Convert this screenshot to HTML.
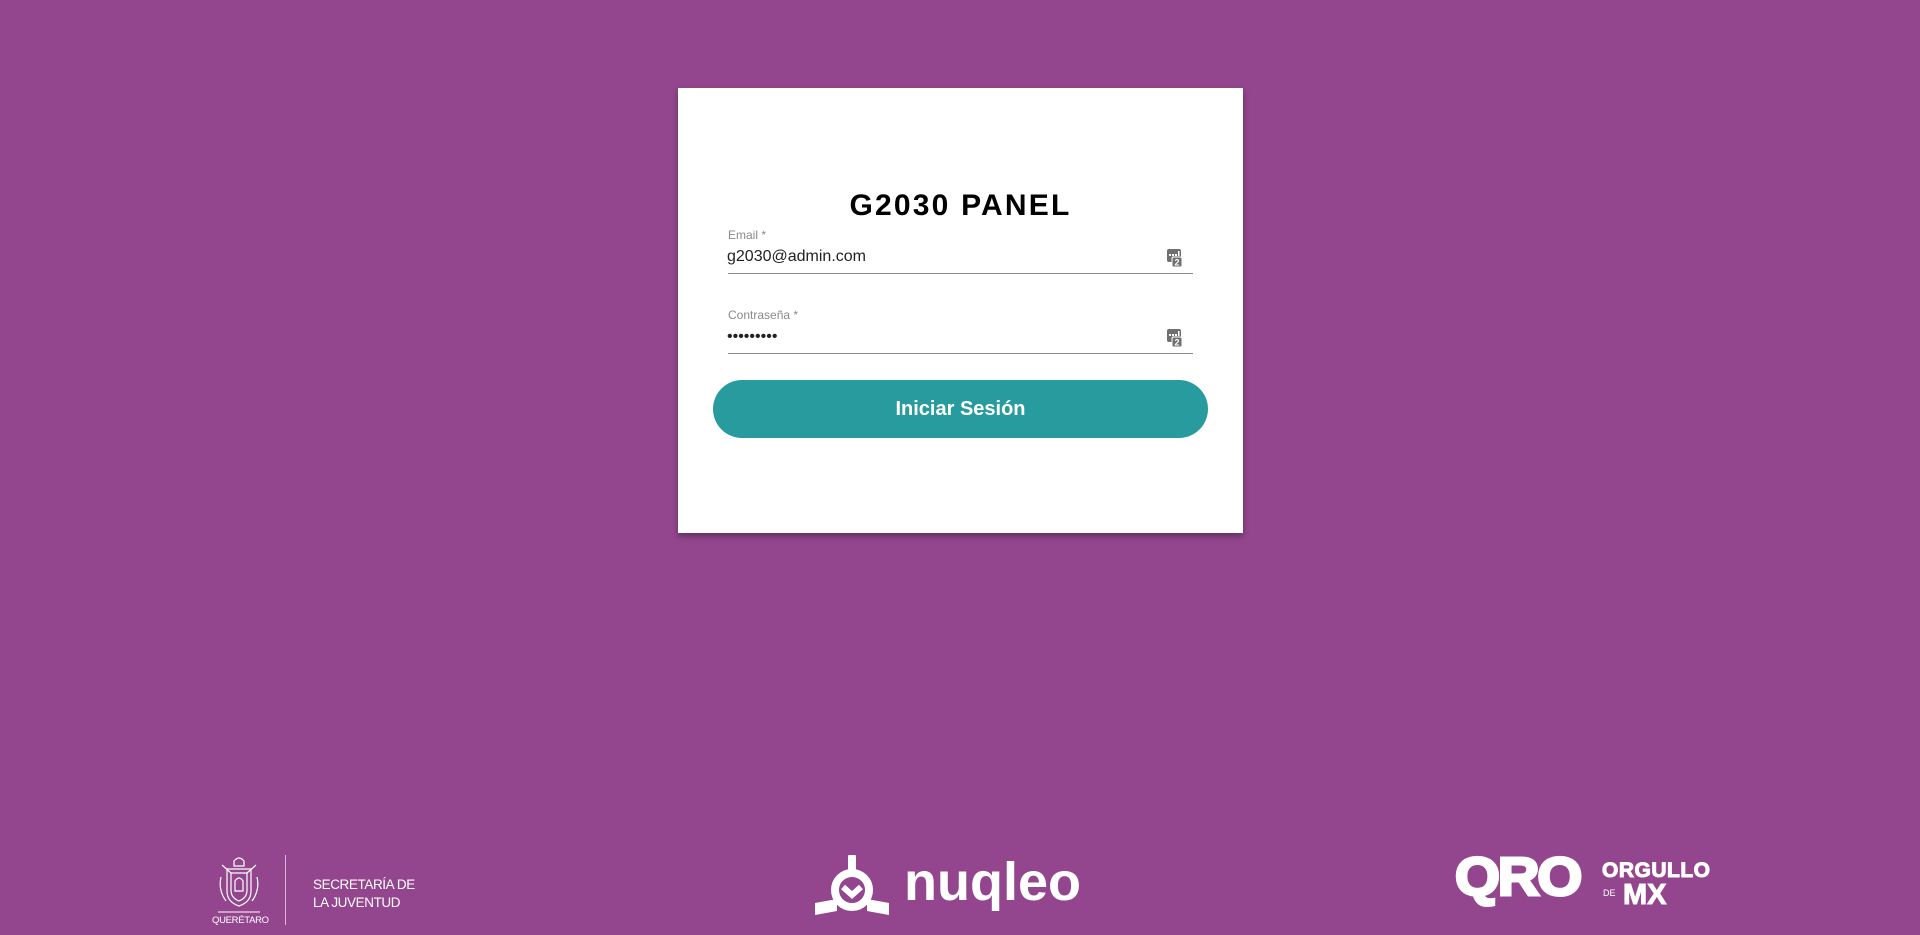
<!DOCTYPE html>
<html><head><meta charset="utf-8"><style>
html,body{margin:0;padding:0;width:1920px;height:935px;overflow:hidden;background:#93468d;font-family:"Liberation Sans",Arial,sans-serif}
.card{position:absolute;left:678px;top:88px;width:565px;height:445px;background:#fff;box-shadow:0 3px 6px rgba(0,0,0,.35)}
.abs{position:absolute}
.title{width:565px;text-align:center;font-weight:bold;font-size:30px;letter-spacing:2.2px;color:#000}
.lbl{font-size:12px;color:#8a8a8a}
.val{font-size:16px;color:#222}
.line{height:1px;background:#8c8c8c;width:465px}
.btn{left:713px;top:380px;width:495px;height:58px;border-radius:29px;background:#289b9f;color:#fff;font-weight:bold;font-size:20px;text-align:center;line-height:58px}
.w{color:#fff}
</style></head><body>
<div class="card"></div>
<div class="abs title" style="left:678px;top:189px">G2030 PANEL</div>
<div class="abs lbl" style="left:728px;top:228px">Email *</div>
<div class="abs val" style="left:727px;top:248px">g2030@admin.com</div>
<div class="abs line" style="left:728px;top:273px"></div>
<svg class="abs" style="left:1166px;top:248px" width="18" height="20" viewBox="0 0 18 20"><rect x="1" y="1" width="14" height="13" rx="2" fill="#6f6f6f"/><rect x="3" y="6" width="2" height="2" fill="#fff"/><rect x="6" y="6" width="2" height="2" fill="#fff"/><rect x="9" y="6" width="2" height="2" fill="#fff"/><rect x="12" y="3" width="1.5" height="5" fill="#fff"/><rect x="6" y="9" width="10" height="10" rx="1.5" fill="#6f6f6f" stroke="#fff" stroke-width="1"/><text x="11" y="17.5" font-size="9" font-weight="bold" fill="#fff" text-anchor="middle" font-family="Liberation Sans">2</text></svg>
<div class="abs lbl" style="left:728px;top:308px">Contraseña *</div>
<div class="abs val" style="left:727px;top:328px;font-size:16px;letter-spacing:0">•••••••••</div>
<div class="abs line" style="left:728px;top:353px"></div>
<svg class="abs" style="left:1166px;top:328px" width="18" height="20" viewBox="0 0 18 20"><rect x="1" y="1" width="14" height="13" rx="2" fill="#6f6f6f"/><rect x="3" y="6" width="2" height="2" fill="#fff"/><rect x="6" y="6" width="2" height="2" fill="#fff"/><rect x="9" y="6" width="2" height="2" fill="#fff"/><rect x="12" y="3" width="1.5" height="5" fill="#fff"/><rect x="6" y="9" width="10" height="10" rx="1.5" fill="#6f6f6f" stroke="#fff" stroke-width="1"/><text x="11" y="17.5" font-size="9" font-weight="bold" fill="#fff" text-anchor="middle" font-family="Liberation Sans">2</text></svg>
<div class="abs btn">Iniciar Sesión</div>

<!-- Queretaro crest -->
<svg class="abs" style="left:216px;top:855px" width="46" height="60" viewBox="0 0 46 60" fill="none" stroke="#fff" stroke-width="1.2">
<path d="M18 6 Q23 0 28 6 L28 11 L18 11 Z"/><path d="M6 10 L15 18 M40 10 L31 18"/>
<path d="M11 14 H35 V36 Q35 47 23 51 Q11 47 11 36 Z"/><path d="M15 18 H31 V35 Q31 43 23 46 Q15 43 15 35 Z"/>
<path d="M19 26 Q23 20 27 26 V36 H19 Z"/><path d="M5 22 Q2 35 10 46 M41 22 Q44 35 36 46"/>
<line x1="2" y1="57" x2="44" y2="57" stroke-width="1"/>
</svg>
<div class="abs w" style="left:212px;top:915px;font-size:9.5px;width:54px;text-align:center;letter-spacing:-.3px">QUERÉTARO</div>
<div class="abs" style="left:285px;top:855px;width:1px;height:70px;background:#d9b8d6"></div>
<div class="abs w" style="left:313px;top:876px;font-size:13.5px;line-height:18px;letter-spacing:-.4px">SECRETARÍA DE<br>LA JUVENTUD</div>

<!-- nuqleo -->
<svg class="abs" style="left:813px;top:853px" width="78" height="66" viewBox="0 0 78 66" fill="#fff">
<rect x="35" y="2" width="8" height="16" rx="1"/>
<circle cx="39" cy="37" r="17" fill="none" stroke="#fff" stroke-width="8"/>
<path d="M30 34 L39 42 L48 34" fill="none" stroke="#fff" stroke-width="6"/>
<path d="M2 50 L24 46 L24 58 L2 62 Z"/><path d="M76 50 L54 46 L54 58 L76 62 Z"/>
</svg>
<div class="abs w" style="left:904px;top:851px;font-size:54px;font-weight:bold;letter-spacing:0">nuqleo</div>

<!-- QRO -->
<div class="abs w" style="left:1455px;top:846px;font-size:54px;font-weight:bold;letter-spacing:-2px;-webkit-text-stroke:3px #fff;transform:scaleX(1.07);transform-origin:left">QRO</div>
<div class="abs w" style="left:1602px;top:859px;font-size:21px;font-weight:bold;-webkit-text-stroke:1px #fff;letter-spacing:.5px">ORGULLO</div>
<div class="abs w" style="left:1603px;top:888px;font-size:9px">DE</div>
<div class="abs w" style="left:1623px;top:879px;font-size:29px;font-weight:bold;-webkit-text-stroke:1px #fff">MX</div>
</body></html>
